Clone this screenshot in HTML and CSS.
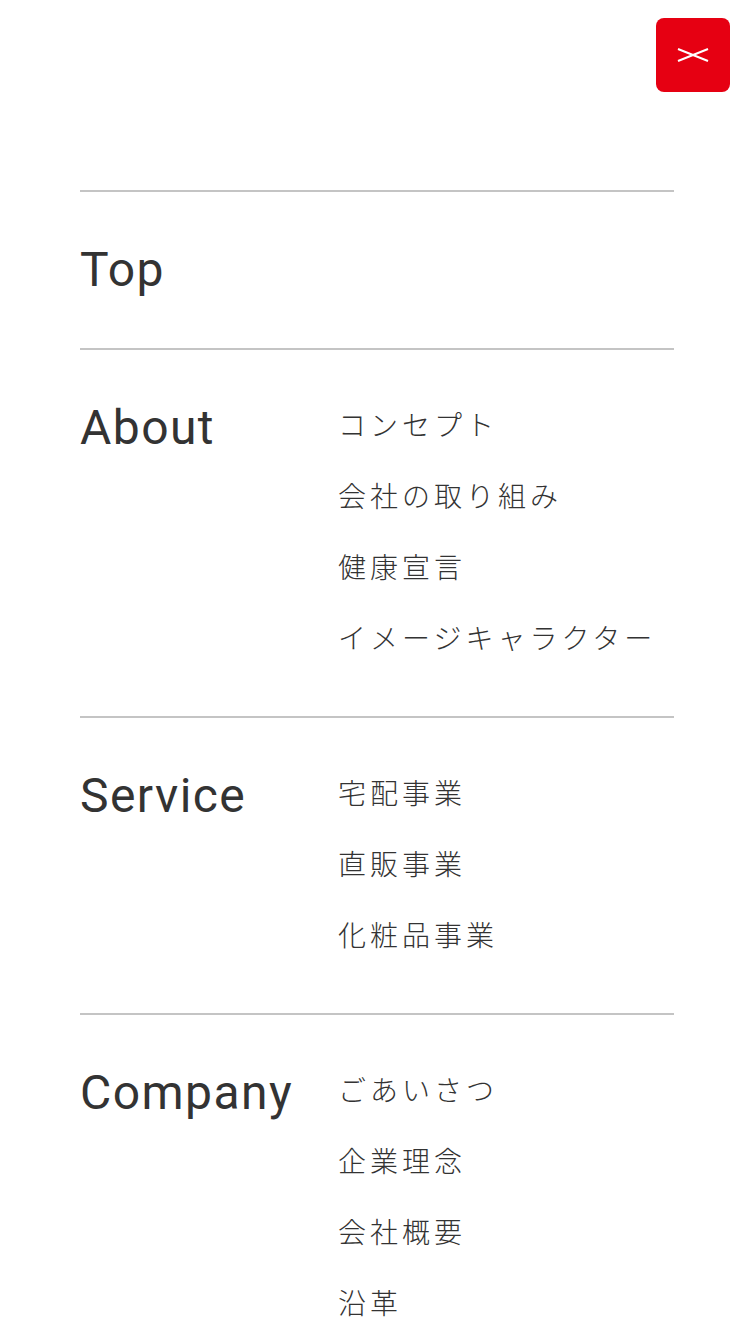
FILE: index.html
```html
<!DOCTYPE html>
<html lang="ja">
<head>
    <meta charset="UTF-8">
    <meta name="viewport" content="width=device-width, initial-scale=1.0">
    <title>Menu</title>
    <link rel="stylesheet" href="styles.css">
</head>
<body>
    <header class="menu-header">
        <button class="close-button" aria-label="閉じる">
            <svg width="32" height="14" viewBox="0 0 32 14">
                <line x1="1" y1="1" x2="31" y2="13" stroke="#fff" stroke-width="2"/>
                <line x1="1" y1="13" x2="31" y2="1" stroke="#fff" stroke-width="2"/>
            </svg>
        </button>
    </header>
    <nav class="menu">
        <section class="menu-section">
            <a class="menu-title" href="#">Top</a>
        </section>
        <section class="menu-section">
            <a class="menu-title" href="#">About</a>
            <ul class="menu-links">
                <li><a href="#">コンセプト</a></li>
                <li><a href="#">会社の取り組み</a></li>
                <li><a href="#">健康宣言</a></li>
                <li><a href="#">イメージキャラクター</a></li>
            </ul>
        </section>
        <section class="menu-section">
            <a class="menu-title" href="#">Service</a>
            <ul class="menu-links">
                <li><a href="#">宅配事業</a></li>
                <li><a href="#">直販事業</a></li>
                <li><a href="#">化粧品事業</a></li>
            </ul>
        </section>
        <section class="menu-section">
            <a class="menu-title" href="#">Company</a>
            <ul class="menu-links">
                <li><a href="#">ごあいさつ</a></li>
                <li><a href="#">企業理念</a></li>
                <li><a href="#">会社概要</a></li>
                <li><a href="#">沿革</a></li>
            </ul>
        </section>
    </nav>
</body>
</html>
```

FILE: styles.css
```css
body {
    margin: 0;
    background-color: #ffffff;
    font-family: Roboto, "Noto Sans CJK JP", sans-serif;
    color: #333;
}
a {
    color: inherit;
    text-decoration: none;
}
.menu-header {
    display: flex;
    justify-content: flex-end;
    padding: 18px 24px 0;
}
.close-button {
    width: 74px;
    height: 74px;
    border: none;
    border-radius: 8px;
    background-color: #e60012;
    display: flex;
    align-items: center;
    justify-content: center;
    padding: 0;
    cursor: pointer;
}
.menu {
    margin: 98px 80px 0;
}
.menu-section {
    display: flex;
    border-top: 2px solid #c4c4c4;
    padding: 37px 0 41px;
}
.menu-title {
    width: 258px;
    flex-shrink: 0;
    padding-top: 3px;
    font-size: 48px;
    line-height: 75px;
    letter-spacing: 0.03em;
}
.menu-links {
    list-style: none;
    margin: 0 0 2px;
    padding: 2px 0 0;
}
.menu-links li {
    font-family: "Noto Sans CJK JP", sans-serif;
    font-weight: 300;
    font-size: 28px;
    line-height: 71px;
    letter-spacing: 4px;
}
```
